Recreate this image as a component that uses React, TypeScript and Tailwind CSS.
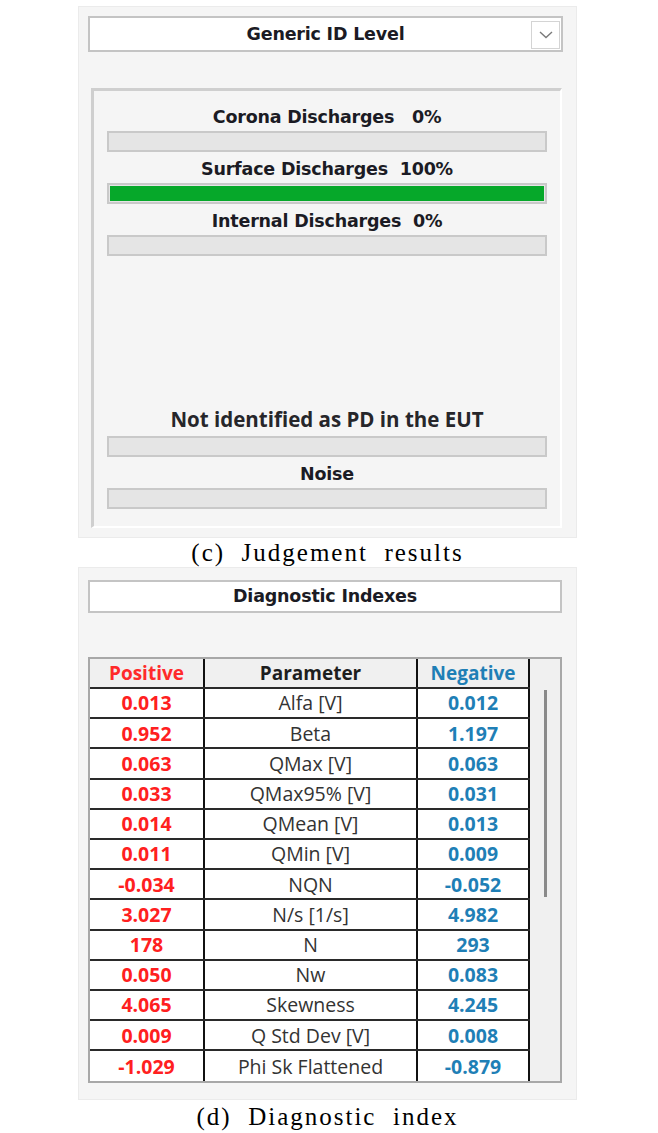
import React from "react";

const tahoma = { fontFamily: '"DejaVu Sans", Verdana, sans-serif' };
const segoe = { fontFamily: '"Open Sans", "Noto Sans", sans-serif' };
const serif = { fontFamily: '"Liberation Serif", "Times New Roman", serif' };

function Bar({ value }: { value: number }) {
  return (
    <div className="h-[21px] w-full border-2 border-[#c9c9c9] bg-[#e5e5e5] p-[1px]">
      {value > 0 && <div className="h-full bg-[#06a82a]" style={{ width: `${value}%` }} />}
    </div>
  );
}

function Item({ label, value }: { label: string; value: number }) {
  return (
    <div className="flex flex-col">
      <div
        className="flex h-[30px] items-center justify-center whitespace-pre pt-[3px] text-[17.5px] font-bold tracking-[-0.2px] text-[#1b1b24]"
        style={tahoma}
      >
        {label}
      </div>
      <Bar value={value} />
    </div>
  );
}

const rows: [string, string, string][] = [
  ["0.013", "Alfa [V]", "0.012"],
  ["0.952", "Beta", "1.197"],
  ["0.063", "QMax [V]", "0.063"],
  ["0.033", "QMax95% [V]", "0.031"],
  ["0.014", "QMean [V]", "0.013"],
  ["0.011", "QMin [V]", "0.009"],
  ["-0.034", "NQN", "-0.052"],
  ["3.027", "N/s [1/s]", "4.982"],
  ["178", "N", "293"],
  ["0.050", "Nw", "0.083"],
  ["4.065", "Skewness", "4.245"],
  ["0.009", "Q Std Dev [V]", "0.008"],
  ["-1.029", "Phi Sk Flattened", "-0.879"],
];

export default function App() {
  return (
    <div className="min-h-[1133px] w-[658px] bg-white">
      <div className="ml-[78px] w-[499px] pt-[6px]">
        {/* Panel 1 */}
        <div className="h-[532px] border border-[#ebebeb] bg-[#f5f5f5] px-[9px] pt-[9px]">
          <div className="relative flex h-[36px] w-[475px] items-center justify-center border-2 border-[#c4c4c4] bg-white">
            <span className="text-[17.5px] font-bold tracking-[-0.2px] text-[#1b1b24]" style={tahoma}>
              Generic ID Level
            </span>
            <div className="absolute right-[1px] top-[3px] flex h-[28px] w-[29px] items-center justify-center border border-[#d4d4d4] bg-white">
              <svg width="14" height="8" viewBox="0 0 14 8">
                <path d="M1 1 L7 6.5 L13 1" fill="none" stroke="#7a7a7a" strokeWidth="1.4" />
              </svg>
            </div>
          </div>
          <div className="ml-[3px] mt-[36px] flex h-[440px] w-[471px] flex-col border-l-[3px] border-t-[3px] border-r-2 border-b-2 border-l-[#cfcfcf] border-t-[#cfcfcf] border-r-white border-b-white bg-[#f5f5f5] px-[13px] pb-[17px] pt-[10px]">
            <div className="flex flex-col gap-[1px]">
              <Item label="Corona Discharges   0%" value={0} />
              <Item label="Surface Discharges  100%" value={100} />
              <Item label="Internal Discharges  0%" value={0} />
            </div>
            <div className="mt-auto flex flex-col">
              <div
                className="flex h-[30px] items-center justify-center pb-[3px] text-[20.5px] font-bold text-[#26262a]"
                style={segoe}
              >
                Not identified as PD in the EUT
              </div>
              <Bar value={0} />
              <div className="h-[1px]" />
              <Item label="Noise" value={0} />
            </div>
          </div>
        </div>

        <div className="flex h-[29px] items-center justify-center text-[25px] tracking-[2px] text-black" style={serif}>
          (c)&nbsp; Judgement&nbsp; results
        </div>

        {/* Panel 2 */}
        <div className="h-[533px] border border-[#ebebeb] bg-[#f5f5f5] px-[9px] pt-[12px]">
          <div className="flex h-[33px] w-[474px] items-center justify-center border-2 border-[#c4c4c4] bg-white">
            <span className="text-[17.5px] font-bold tracking-[-0.2px] text-[#1b1b24]" style={tahoma}>
              Diagnostic Indexes
            </span>
          </div>
          <div className="mt-[44px] flex w-[474px] border-2 border-[#a8a8a8] bg-[#f0f0f0]" style={segoe}>
            <div className="flex w-[440px] flex-col">
              <div className="flex h-[30px] border-b-2 border-[#2a2a2a] bg-[#f0f0f0] text-[19px] font-bold">
                <div className="flex w-[115px] items-center justify-center border-r-2 border-[#111] text-[#ff2a2a]">
                  Positive
                </div>
                <div className="flex w-[213px] items-center justify-center border-r-2 border-[#111] text-[#1e1e1e]">
                  Parameter
                </div>
                <div className="flex w-[112px] items-center justify-center border-r-2 border-[#111] text-[#1f7fb6]">
                  Negative
                </div>
              </div>
              {rows.map((r, i) => (
                <div
                  key={i}
                  className={
                    i < rows.length - 1
                      ? "flex h-[30.2px] border-b-2 border-[#2a2a2a] bg-white text-[19.5px]"
                      : "flex h-[30.2px] bg-white text-[19.5px]"
                  }
                >
                  <div className="flex w-[115px] items-center justify-center border-r-2 border-[#111] font-bold text-[#ff2020]">
                    {r[0]}
                  </div>
                  <div className="flex w-[213px] items-center justify-center border-r-2 border-[#111] text-[#333]">
                    {r[1]}
                  </div>
                  <div className="flex w-[112px] items-center justify-center border-r-2 border-[#111] font-bold text-[#1f7fb6]">
                    {r[2]}
                  </div>
                </div>
              ))}
            </div>
            <div className="flex flex-1 justify-center pt-[31px]">
              <div className="h-[207px] w-[3px] bg-[#8a8a8a]" />
            </div>
          </div>
        </div>

        <div className="flex h-[33px] items-center justify-center text-[25px] tracking-[2px] text-black" style={serif}>
          (d)&nbsp; Diagnostic&nbsp; index
        </div>
      </div>
    </div>
  );
}
